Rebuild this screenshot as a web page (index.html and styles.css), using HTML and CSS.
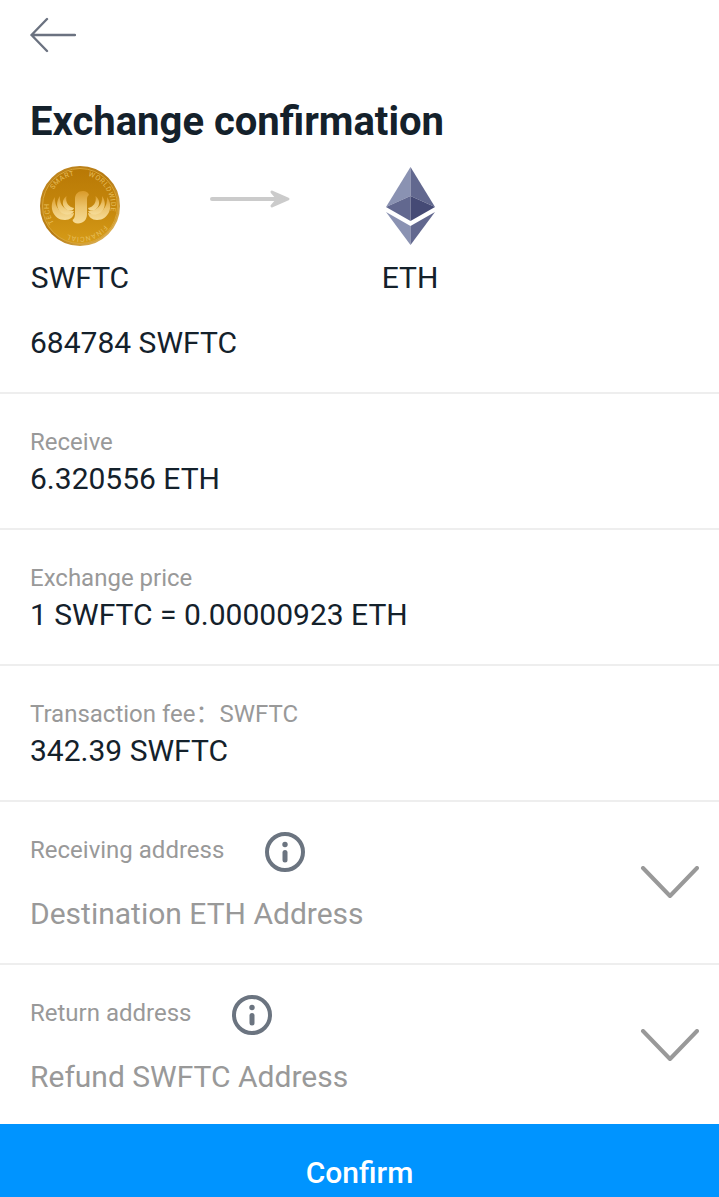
FILE: index.html
```
<!DOCTYPE html>
<html lang="en">
<head>
    <meta charset="UTF-8">
    <meta name="viewport" content="width=device-width, initial-scale=1">
    <title>Exchange confirmation</title>
    <link rel="stylesheet" href="styles.css">
</head>
<body>
    <header class="header">
        <button class="icon-btn back" type="button" aria-label="Back">
            <svg width="46" height="36" viewBox="0 0 46 36" fill="none" stroke="#6b7280" stroke-width="2.4" stroke-linecap="round" stroke-linejoin="round">
                <path d="M17 2L1.500 18L17 34M1.500 18H45"/>
            </svg>
        </button>
        <h1>Exchange confirmation</h1>
    </header>
    <main>
        <section class="pair-box">
            <div class="pair">
                <div class="coin">
                    <svg width="80" height="80" viewBox="0 0 80 80">
                        <defs>
                            <linearGradient id="gold" x1="0" y1="0" x2="0" y2="1">
                                <stop offset="0" stop-color="#b87805"/>
                                <stop offset="0.5" stop-color="#c4860c"/>
                                <stop offset="1" stop-color="#d79c18"/>
                            </linearGradient>
                            <linearGradient id="rim" x1="0" y1="0" x2="1" y2="1">
                                <stop offset="0" stop-color="#c28a24"/>
                                <stop offset="0.5" stop-color="#b67a12"/>
                                <stop offset="1" stop-color="#e8c066"/>
                            </linearGradient>
                            <linearGradient id="shine" x1="0" y1="0" x2="0" y2="1">
                                <stop offset="0" stop-color="#d99a28"/>
                                <stop offset="0.5" stop-color="#ecc46c"/>
                                <stop offset="1" stop-color="#f6dc98"/>
                            </linearGradient>
                            <path id="ring" d="M16.700 63.300A33 33 0 1 1 63.300 63.300A33 33 0 0 1 16.700 63.300"/>
                            <g id="wing">
                                <path d="M15 31C8 40 13 54 25 54C30 54 33.500 51 34 47C24 50 14 44 15 31Z"/>
                                <path d="M20 30C14 38 18 48.500 28 48.500C31 48.500 33 47 34 45C26 45 19 40 20 30Z"/>
                                <path d="M26.500 30C20 35 23 44 30 44.500C32 44.500 33.500 44 34 42C29 41 25 37 26.500 30Z"/>
                            </g>
                        </defs>
                        <circle cx="40" cy="40" r="39" fill="url(#gold)" stroke="url(#rim)" stroke-width="2"/>
                        <circle cx="40" cy="40" r="37.500" fill="none" stroke="#d9a63a" stroke-width="1"/>
                        <g fill="url(#shine)">
                            <use href="#wing"/>
                            <use href="#wing" transform="matrix(-1 0 0 1 82 0)"/>
                            <path d="M35 48V33C35 28 38 25 43 25C46 25 48 26 49 29C47.500 30 47 31 47 34V48C47 54 43 57.500 38 57.500C35 57.500 33 56 32.500 54C34 53 35 51 35 48Z"/>
                        </g>
                        <text class="coin-ring"><textPath href="#ring" startOffset="18">TECH</textPath></text>
                        <text class="coin-ring"><textPath href="#ring" startOffset="58">SMART</textPath></text>
                        <text class="coin-ring"><textPath href="#ring" startOffset="111">WORLDWIDE</textPath></text>
                        <text class="coin-ring"><textPath href="#ring" startOffset="173">FINANCIAL</textPath></text>
                    </svg>
                    <span>SWFTC</span>
                </div>
                <svg class="arrow" width="80" height="20" viewBox="0 0 80 20" fill="none" stroke="#cbcbcb" stroke-width="4" stroke-linecap="round" stroke-linejoin="round">
                    <path d="M2 10H75"/>
                    <path d="M62 3L78 10L62 17L68 10Z" fill="#cbcbcb" stroke-width="3"/>
                </svg>
                <div class="coin">
                    <svg width="80" height="80" viewBox="0 0 80 80">
                        <path fill="#8a92b2" d="M40.500 1L16 41L40.500 30Z"/>
                        <path fill="#62688f" d="M40.500 1L65 41L40.500 30Z"/>
                        <path fill="#62688f" d="M40.500 30L16 41L40.500 55Z"/>
                        <path fill="#454a75" d="M40.500 30L65 41L40.500 55Z"/>
                        <path fill="#8a92b2" d="M16 46L40.500 60V79Z"/>
                        <path fill="#62688f" d="M65 46L40.500 60V79Z"/>
                    </svg>
                    <span>ETH</span>
                </div>
            </div>
            <p>684784 SWFTC</p>
        </section>
        <section class="row">
            <h2>Receive</h2>
            <p>6.320556 ETH</p>
        </section>
        <section class="row">
            <h2>Exchange price</h2>
            <p>1 SWFTC = 0.00000923 ETH</p>
        </section>
        <section class="row">
            <h2>Transaction fee：SWFTC</h2>
            <p>342.39 SWFTC</p>
        </section>
        <section class="row address">
            <div class="field">
                <div class="field-head">
                    <label for="receiving">Receiving address</label>
                    <button class="icon-btn" type="button" aria-label="About receiving address">
                        <svg width="40" height="40" viewBox="0 0 40 40">
                            <circle cx="20" cy="20" r="18" fill="none" stroke="#6b7480" stroke-width="4"/>
                            <circle cx="20" cy="12.500" r="2.700" fill="#6b7480"/>
                            <path d="M20 20.500V28" stroke="#6b7480" stroke-width="5" stroke-linecap="round"/>
                        </svg>
                    </button>
                </div>
                <input id="receiving" type="text" placeholder="Destination ETH Address">
            </div>
            <button class="icon-btn" type="button" aria-label="Choose receiving address">
                <svg width="60" height="34" viewBox="0 0 60 34" fill="none" stroke="#999" stroke-width="4" stroke-linecap="round" stroke-linejoin="round">
                    <path d="M4 2L31 30L58 2"/>
                </svg>
            </button>
        </section>
        <section class="row address">
            <div class="field">
                <div class="field-head">
                    <label for="return">Return address</label>
                    <button class="icon-btn" type="button" aria-label="About return address">
                        <svg width="40" height="40" viewBox="0 0 40 40">
                            <circle cx="20" cy="20" r="18" fill="none" stroke="#6b7480" stroke-width="4"/>
                            <circle cx="20" cy="12.500" r="2.700" fill="#6b7480"/>
                            <path d="M20 20.500V28" stroke="#6b7480" stroke-width="5" stroke-linecap="round"/>
                        </svg>
                    </button>
                </div>
                <input id="return" type="text" placeholder="Refund SWFTC Address">
            </div>
            <button class="icon-btn" type="button" aria-label="Choose return address">
                <svg width="60" height="34" viewBox="0 0 60 34" fill="none" stroke="#999" stroke-width="4" stroke-linecap="round" stroke-linejoin="round">
                    <path d="M4 2L31 30L58 2"/>
                </svg>
            </button>
        </section>
    </main>
    <button class="confirm" type="button">Confirm</button>
</body>
</html>
```

FILE: styles.css
```
* {
    box-sizing: border-box;
}

body {
    display: flex;
    flex-direction: column;
    min-height: 100vh;
    margin: 0;
    background-color: #fff;
    color: #14212b;
    font-family: Roboto, "Noto Sans CJK SC", sans-serif;
    font-size: 30px;
    line-height: 38px;
}

h1, h2, p {
    margin: 0;
}

svg {
    display: block;
}

button, input {
    padding: 0;
    border: 0;
    background: none;
    font: inherit;
}

button {
    cursor: pointer;
}

.icon-btn {
    flex: none;
}

.header {
    padding: 17px 30px 0;
}

.back {
    display: block;
}

h1 {
    margin-top: 44px;
    font-size: 40px;
    font-weight: bold;
    line-height: 50px;
}

.pair-box {
    padding: 19px 30px 30px;
    border-bottom: 2px solid #eee;
}

.pair {
    display: flex;
    align-items: flex-start;
    margin-bottom: 27px;
}

.coin {
    display: flex;
    flex-direction: column;
    align-items: center;
    gap: 13px;
    width: 100px;
}

.coin-ring {
    fill: #e6bd5c;
    font-size: 7px;
    letter-spacing: 1px;
    text-anchor: middle;
    dominant-baseline: middle;
}

.arrow {
    margin: 23px 70px 0 80px;
}

.row {
    padding: 30px;
    border-bottom: 2px solid #eee;
}

.row h2,
.row label {
    color: #999;
    font-size: 24px;
    font-weight: normal;
    line-height: 36px;
}

.address {
    display: flex;
    align-items: center;
    padding-right: 20px;
}

.address:last-child {
    padding-bottom: 28px;
    border-bottom: 0;
}

.field {
    flex: 1;
}

.field-head {
    display: flex;
    align-items: flex-start;
    gap: 41px;
    margin-bottom: 23px;
}

.field input {
    display: block;
    width: 100%;
    height: 38px;
    color: #14212b;
}

.field input::placeholder {
    color: #999;
    opacity: 1;
}

.confirm {
    flex: 1;
    padding: 30px 0 5px;
    background-color: #0094ff;
    color: #fff;
    font-weight: 500;
}
```
